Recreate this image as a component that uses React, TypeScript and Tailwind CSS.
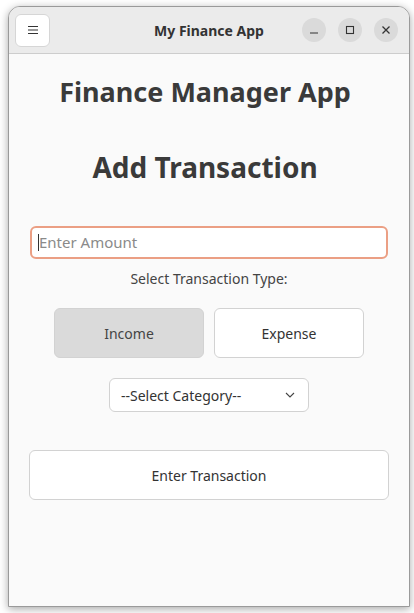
import React from "react";

const font = { fontFamily: '"Noto Sans", "Open Sans", sans-serif' };

export default function App() {
  return (
    <div className="w-[414px] h-[613px] bg-white pl-[8px] pt-[6px]" style={font}>
      <div className="w-[402px] h-[601px] flex flex-col rounded-t-[12px] overflow-hidden border border-[#9a9a9a] shadow-[0_2px_8px_rgba(0,0,0,0.35)] bg-[#fafafa]">
        {/* Header bar */}
        <div className="h-[47px] shrink-0 flex items-center bg-[#ebebeb] border-b border-[#cdcdcd] px-[6px] relative">
          <button className="w-[35px] h-[33px] bg-white rounded-[6px] border border-[#d6d6d6] flex items-center justify-center">
            <svg width="12" height="10" viewBox="0 0 12 10" className="text-[#333]">
              <path d="M1 1.5h10M1 5h10M1 8.5h10" stroke="currentColor" strokeWidth="1" />
            </svg>
          </button>
          <div className="absolute inset-x-0 text-center pointer-events-none text-[14px] font-bold text-[#333]">
            My Finance App
          </div>
          <div className="ml-auto flex items-center gap-[12px] pr-[5px]">
            <span className="w-[24px] h-[24px] rounded-full bg-[#dadada] flex items-center justify-center">
              <svg width="10" height="10" viewBox="0 0 10 10">
                <path d="M1 8h8" stroke="#333" strokeWidth="1.2" />
              </svg>
            </span>
            <span className="w-[24px] h-[24px] rounded-full bg-[#dadada] flex items-center justify-center">
              <svg width="10" height="10" viewBox="0 0 10 10">
                <rect x="1.5" y="1.5" width="7" height="7" fill="none" stroke="#333" strokeWidth="1.1" />
              </svg>
            </span>
            <span className="w-[24px] h-[24px] rounded-full bg-[#dadada] flex items-center justify-center">
              <svg width="10" height="10" viewBox="0 0 10 10">
                <path d="M1.5 1.5l7 7M8.5 1.5l-7 7" stroke="#333" strokeWidth="1.3" />
              </svg>
            </span>
          </div>
        </div>

        {/* Content */}
        <div className="flex flex-col items-center text-[#333]">
          <h1 className="mt-[19px] mr-[8px] text-[27px] leading-[38px] font-bold text-[#3a3a3a]">Finance Manager App</h1>
          <h2 className="mt-[37px] mr-[8px] text-[28px] leading-[38px] font-bold text-[#3a3a3a]">Add Transaction</h2>

          <div className="mt-[40px] w-[358px] h-[33px] rounded-[6px] border-2 border-[#eb9f84] bg-white flex items-center px-[6px]">
            <span className="w-px h-[17px] bg-[#333]" />
            <span className="text-[15px] text-[#8a8a8a]">Enter Amount</span>
          </div>

          <p className="mt-[10px] text-[14px] leading-[20px] text-[#444]">Select Transaction Type:</p>

          <div className="mt-[19px] flex gap-[10px]">
            <button className="w-[150px] h-[50px] rounded-[6px] bg-[#dadada] border border-[#d2d2d2] text-[14px] text-[#444]">
              Income
            </button>
            <button className="w-[150px] h-[50px] rounded-[6px] bg-white border border-[#d2d2d2] text-[14px] text-[#333]">
              Expense
            </button>
          </div>

          <div className="mt-[20px] w-[200px] h-[34px] rounded-[6px] bg-white border border-[#d2d2d2] flex items-center pl-[11px] pr-[12px]">
            <span className="text-[14px] text-[#333]">--Select Category--</span>
            <svg className="ml-auto" width="12" height="8" viewBox="0 0 12 8">
              <path d="M2 2l4 4 4-4" fill="none" stroke="#444" strokeWidth="1.1" />
            </svg>
          </div>

          <button className="mt-[38px] w-[360px] h-[50px] rounded-[6px] bg-white border border-[#d2d2d2] text-[14px] text-[#333]">
            Enter Transaction
          </button>
        </div>
      </div>
    </div>
  );
}
